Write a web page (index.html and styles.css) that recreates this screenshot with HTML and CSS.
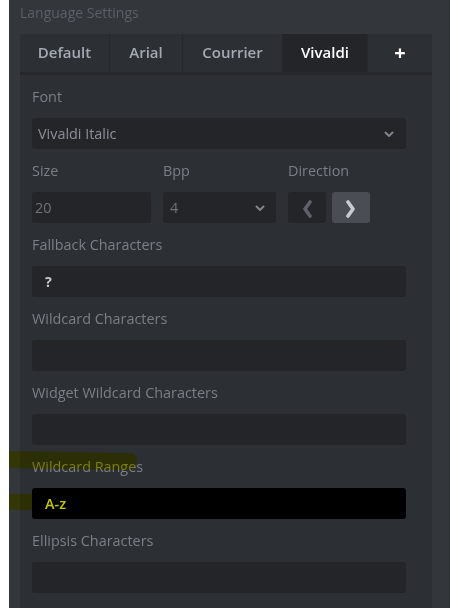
FILE: index.html
```html
<!DOCTYPE html>
<html>
<head>
<meta charset="utf-8">
<link rel="stylesheet" href="styles.css">
</head>
<body>
<div class="outer">
  <div class="title">Language Settings</div>
  <div class="panel">
    <div class="tabs">
      <div class="tab t-default">Default</div>
      <div class="tab t-arial">Arial</div>
      <div class="tab t-cour">Courrier</div>
      <div class="tab t-viv active">Vivaldi</div>
      <div class="tab t-add">+</div>
    </div>
    <div class="content">
      <div class="field">
        <div class="label">Font</div>
        <div class="input select">
          <span class="val">Vivaldi Italic</span>
          <svg class="chev" width="10" height="6" viewBox="0 0 10 6"><path d="M1 1 L5 5 L9 1" fill="none" stroke="#80858d" stroke-width="2"/></svg>
        </div>
      </div>
      <div class="row">
        <div class="col c-size">
          <div class="label">Size</div>
          <div class="input num"><span class="dim">20</span></div>
        </div>
        <div class="col c-bpp">
          <div class="label">Bpp</div>
          <div class="input select bpp">
            <span class="dim">4</span>
            <svg class="chev" width="10" height="6" viewBox="0 0 10 6"><path d="M1 1 L5 5 L9 1" fill="none" stroke="#80858d" stroke-width="2"/></svg>
          </div>
        </div>
        <div class="col c-dir">
          <div class="label">Direction</div>
          <div class="dirs">
            <div class="dbtn">
              <svg class="arrow" width="12" height="18" viewBox="0 0 12 18"><path d="M9 2 L4 9 L9 16" fill="none" stroke="#5d6169" stroke-width="3.6" stroke-linejoin="round" stroke-linecap="round"/></svg>
            </div>
            <div class="dbtn on">
              <svg class="arrow" width="12" height="18" viewBox="0 0 12 18"><path d="M3 2 L8 9 L3 16" fill="none" stroke="#c8ccd2" stroke-width="3.6" stroke-linejoin="round" stroke-linecap="round"/></svg>
            </div>
          </div>
        </div>
      </div>
      <div class="field">
        <div class="label">Fallback Characters</div>
        <div class="input txt"><span class="strong">?</span></div>
      </div>
      <div class="field">
        <div class="label">Wildcard Characters</div>
        <div class="input txt"></div>
      </div>
      <div class="field">
        <div class="label">Widget Wildcard Characters</div>
        <div class="input txt"></div>
      </div>
      <div class="field">
        <div class="label">Wildcard Ranges</div>
        <div class="input txt black"><span class="yellow">A-z</span></div>
      </div>
      <div class="field">
        <div class="label">Ellipsis Characters</div>
        <div class="input txt"></div>
      </div>
    </div>
  </div>
  <div class="mark m1"></div>
  <div class="mark m2"></div>
</div>
</body>
</html>
```

FILE: styles.css
```css
html, body {
  margin: 0;
  padding: 0;
  background: #ffffff;
  height: 608px;
  overflow: hidden;
}
body {
  font-family: "Open Sans", "Liberation Sans", sans-serif;
  font-size: 14px;
}
.outer {
  position: relative;
  margin-left: 9px;
  height: 608px;
  background: #33363b;
  padding: 3px 18px 0 11px;
  box-sizing: border-box;
  box-shadow: inset -1px 0 0 #2b2d31;
}
.title {
  color: #5b5f67;
  line-height: 20px;
  height: 20px;
  margin-bottom: 11px;
}
.panel {
  background: #2c2f33;
  height: 600px;
}
.tabs {
  display: flex;
  height: 38px;
  border-bottom: 3px solid #25272b;
}
.tab {
  display: flex;
  align-items: center;
  justify-content: center;
  color: #a4aab3;
  font-weight: 600;
  font-size: 15px;
  border-right: 1px solid #26282c;
  box-sizing: border-box;
  padding-bottom: 2px;
}
.t-default { width: 90px; }
.t-arial { width: 73px; }
.t-cour { width: 100px; }
.t-viv { width: 85px; }
.t-add { flex: 1; border-right: none; color: #ffffff; font-size: 20px; font-weight: 700; }
.tab.active { background: #232529; color: #ffffff; }
.content {
  padding: 12px 26px 0 12px;
}
.field, .row {
  margin-bottom: 12px;
}
.label {
  color: #7b7f87;
  font-size: 14.4px;
  line-height: 20px;
  height: 20px;
  margin-bottom: 11px;
}
.input {
  height: 31px;
  background: #232529;
  border-radius: 3px;
  display: flex;
  align-items: center;
  box-sizing: border-box;
  color: #8b9099;
  font-size: 14.4px;
}
.select {
  padding: 0 12px 0 6px;
  justify-content: space-between;
}
.select .val { padding-bottom: 1px; }
.chev { margin-top: 1px; }
.row {
  display: flex;
}
.c-size { width: 119px; margin-right: 12px; }
.c-bpp { width: 113px; margin-right: 12px; }
.num { padding-left: 3px; }
.bpp { padding-left: 7px; padding-right: 11px; }
.dim { color: #6e727a; }
.dirs {
  display: flex;
  gap: 6px;
}
.dbtn {
  width: 38px;
  height: 31px;
  background: #232529;
  border-radius: 3px;
  display: flex;
  align-items: center;
  justify-content: center;
}
.arrow { margin-top: 3px; }
.dbtn.on { background: #4a4d53; }
.txt { padding-left: 13px; }
.strong { color: #c6c9ce; font-weight: 700; }
.black { background: #000000; }
.yellow { color: #c8c800; font-weight: 600; }
.mark {
  position: absolute;
  background: #ffff00;
  mix-blend-mode: multiply;
  opacity: 0.9;
  pointer-events: none;
}
.m1 {
  left: 0;
  top: 452px;
  width: 128px;
  height: 17px;
  border-radius: 2px 8px 10px 2px;
  transform: skewY(1deg);
}
.m2 {
  left: 0;
  top: 494px;
  width: 24px;
  height: 16px;
}
```
